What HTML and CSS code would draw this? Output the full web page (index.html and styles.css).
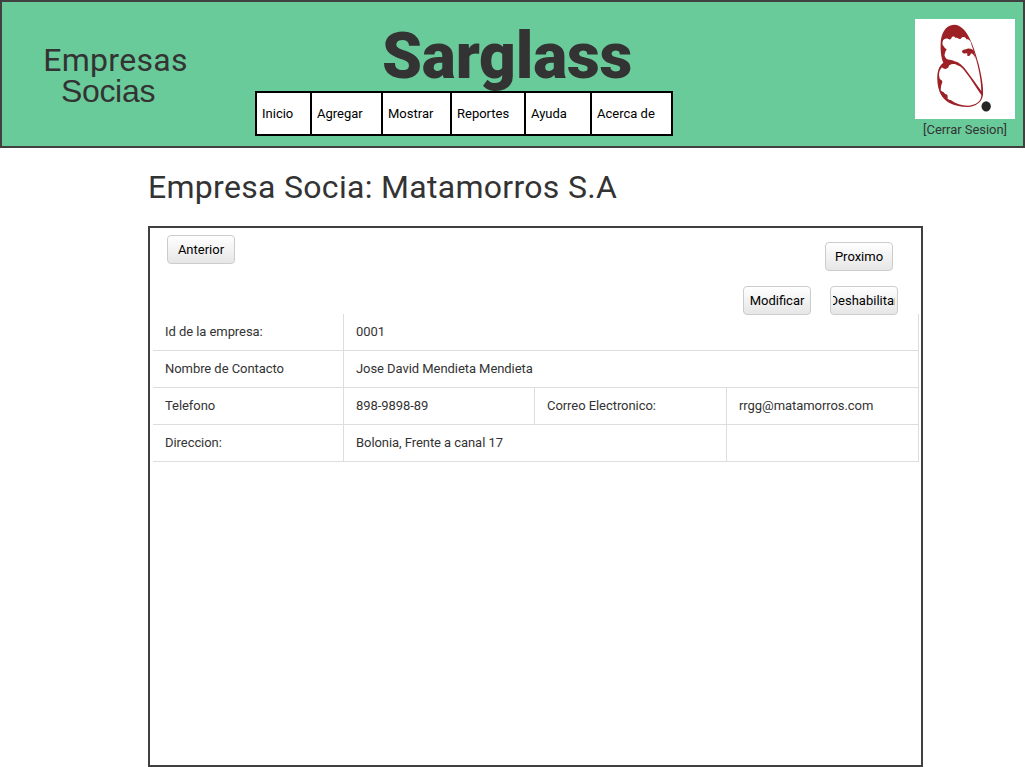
FILE: index.html
```html
<!DOCTYPE html>
<html lang="es">
<head>
<meta charset="utf-8">
<title>Sarglass</title>
<link rel="stylesheet" href="styles.css">
</head>
<body>
<header class="header">
  <div class="section-name"><span class="line-one">Empresas</span><span class="line-two">Socias</span></div>
  <div class="brand">
    <h1 class="brand-title">Sarglass</h1>
    <nav class="menu">
      <a class="item inicio">Inicio</a>
      <a class="item agregar">Agregar</a>
      <a class="item mostrar">Mostrar</a>
      <a class="item reportes">Reportes</a>
      <a class="item ayuda">Ayuda</a>
      <a class="item acerca">Acerca de</a>
    </nav>
  </div>
  <div class="account">
    <svg class="logo" viewBox="0 0 300 300" width="100" height="100">
      <rect width="300" height="300" fill="#fff"/>
      <g transform="translate(45 0)">
        <path fill="#9d2026" d="M73 17C45 18 33 45 32 72C31 98 34 118 40 131C25 142 21 160 22 184C23 215 36 240 57 251C75 260 95 264 113 264C137 263 156 250 159 228C161 205 154 166 145 132C132 83 110 17 73 17Z"/>
        <path fill="#fff" d="M38 68C38 61 48 56 55 60C60 63 64 60 64 57C68 50 74 52 77 57C82 54 88 62 92 60C96 52 107 52 109 61C117 59 124 68 124 76L130 94C140 125 153 170 154 216C140 197 123 173 108 153C97 140 87 129 74 127C66 121 50 124 48 118C44 113 42 109 45 103C45 98 48 95 50 90C42 88 44 84 41 82C38 78 36 74 38 68Z"/>
        <path fill="#9d2026" d="M96 98C96 91 106 92 112 89C120 87 127 91 131 94L138 122C134 110 128 103 123 103C122 108 118 114 112 110C111 106 114 103 110 103C104 104 97 103 96 98Z"/>
        <path fill="#fff" d="M36 145C41 150 47 151 51 148C57 147 55 142 58 139C65 134 76 134 82 139C93 142 101 151 108 161C124 181 140 208 154 228C155 248 135 259 113 260C95 260 77 255 62 243C55 242 51 240 53 234C54 227 49 225 45 225C42 216 35 220 32 213C33 204 33 199 37 190C38 182 29 185 28 175C25 162 29 152 36 145Z"/>
        <ellipse cx="168.500" cy="262" rx="14" ry="15.500" fill="#252525"/>
      </g>
    </svg>
    <a class="logout">[Cerrar Sesion]</a>
  </div>
</header>
<main class="content">
  <h2 class="page-title">Empresa Socia: Matamorros S.A</h2>
  <section class="panel">
    <div class="pager"><button class="btn">Anterior</button><button class="btn next">Proximo</button></div>
    <div class="actions"><button class="btn">Modificar</button><button class="btn">Deshabilitar</button></div>
    <table class="details">
      <colgroup><col class="c1"><col class="c2"><col class="c3"><col class="c4"></colgroup>
      <tr><td>Id de la empresa:</td><td colspan="3">0001</td></tr>
      <tr><td>Nombre de Contacto</td><td colspan="3">Jose David Mendieta Mendieta</td></tr>
      <tr><td>Telefono</td><td>898-9898-89</td><td>Correo Electronico:</td><td>rrgg@matamorros.com</td></tr>
      <tr><td>Direccion:</td><td colspan="2">Bolonia, Frente a canal 17</td><td></td></tr>
    </table>
  </section>
</main>
</body>
</html>
```
FILE: styles.css
```css
* { box-sizing: border-box; }
body { margin: 0; background: #fff; color: #333; font: 13px/20px Roboto, sans-serif; overflow: hidden; }
.header { display: flex; height: 148px; border: 2px solid #404040; background: #6acb9a; }
.section-name { display: flex; flex-direction: column; align-items: center; width: 227px; padding-top: 43px; font-size: 32px; line-height: 31px; }
.line-one { letter-spacing: 0.3px; }
.line-two { font-family: "Liberation Sans", sans-serif; letter-spacing: -0.3px; margin-right: 15px; }
.brand { width: 444px; padding: 21px 0 0 26px; }
.brand-title { margin: 0 0 0 127px; height: 68px; font-size: 64px; line-height: 68px; font-weight: 900; letter-spacing: -0.2px; }
.menu { position: relative; display: flex; width: 418px; height: 45px; border: 2px solid #000; background: #fff; color: #000; }
.item { padding-left: 5px; line-height: 41px; border-right: 2px solid #000; }
.inicio { width: 55px; }
.agregar { width: 71px; }
.mostrar { width: 69px; }
.reportes { width: 74px; }
.ayuda { width: 66px; }
.acerca { width: 79px; border-right: 0; }
.account { display: flex; flex-direction: column; align-items: center; width: 100px; margin-left: auto; margin-right: 8px; padding-top: 17px; }
.logo { display: block; }
.logout { padding-top: 1px; letter-spacing: -0.05px; }
.content { width: 775px; margin-left: 148px; }
.page-title { margin: 0; padding-top: 19px; height: 78px; font-size: 32px; line-height: 40px; font-weight: 400; letter-spacing: 0.3px; white-space: nowrap; }
.panel { height: 541px; padding: 7px 3px 0; border: 2px solid #404040; }
.pager { display: flex; justify-content: space-between; height: 51px; padding: 0 25px 0 14px; }
.next { margin-top: 7px; }
.actions { display: flex; justify-content: flex-end; gap: 19px; height: 28px; padding-right: 20px; }
.btn { display: flex; justify-content: center; align-items: center; width: 68px; height: 29px; padding: 0 2px; border: 1px solid #ccc; border-radius: 4px; background: linear-gradient(#fff, #e6e6e6); color: #000; font: 13px/20px Roboto, sans-serif; overflow: clip; overflow-clip-margin: content-box; white-space: nowrap; }
.details { width: 766px; table-layout: fixed; border-collapse: separate; border-spacing: 0; letter-spacing: -0.06px; }
.c1, .c2 { width: 191px; }
.c3, .c4 { width: 192px; }
.details td { height: 37px; padding: 0 12px; border-right: 1px solid #ddd; border-bottom: 1px solid #ddd; line-height: 20px; }
```
